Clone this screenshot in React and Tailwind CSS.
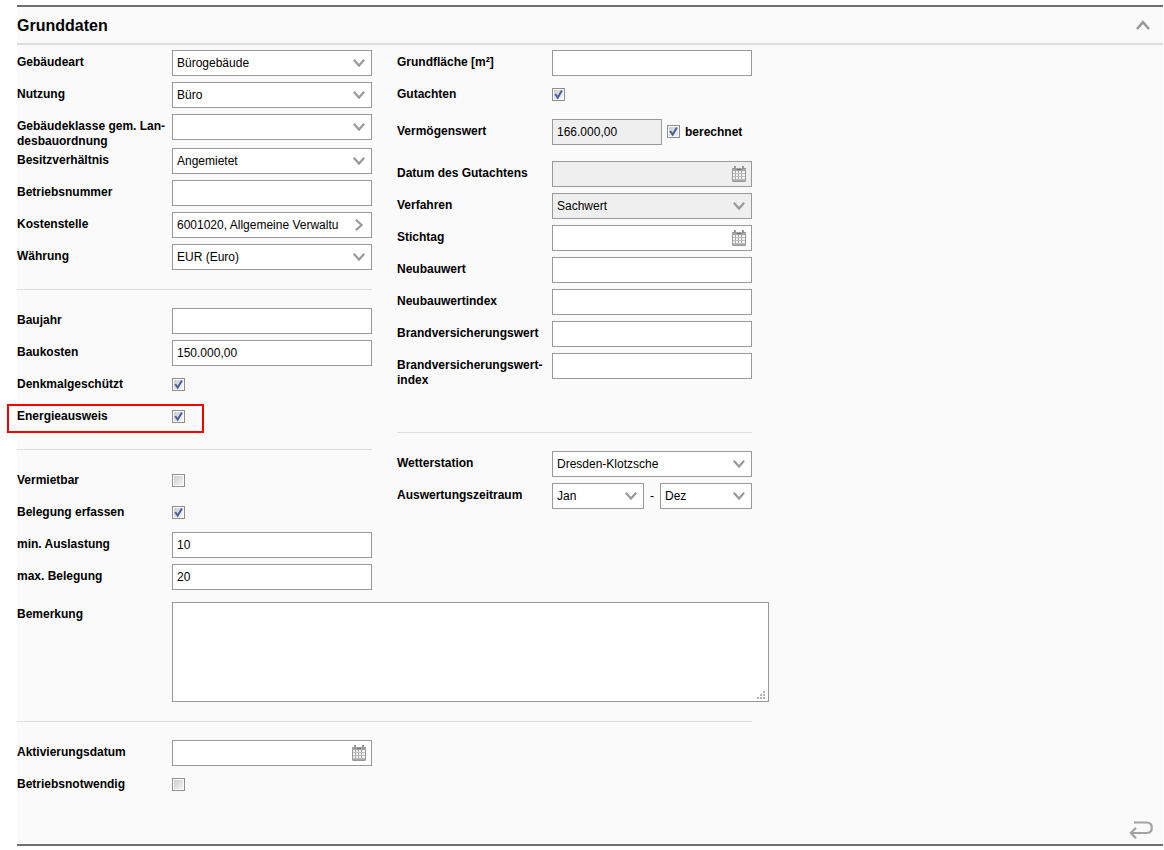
import clsx from "clsx";

function Row({ id, label, children, className }) {
  return (
    <div className={clsx("flex min-h-8", className)}>
      <label htmlFor={id} className="-mb-px w-[155px] shrink-0 pt-[5px] font-bold whitespace-pre-line">
        {label}
      </label>
      {children}
    </div>
  );
}

function Divider({ className = "mt-[13px]" }) {
  return <hr className={clsx("mb-[18px] border-0 border-t border-[#dedede]", className)} />;
}

function Chevron({ className }) {
  return (
    <svg className={className} width="12" height="8" viewBox="0 0 12 8" fill="none" stroke="#999" strokeWidth="2.2">
      <path d="M0.8 0.8L6 6.6L11.2 0.8" />
    </svg>
  );
}

function CalendarIcon() {
  return (
    <svg width="14" height="16" viewBox="0 0 14 16" fill="none">
      <rect x="0.5" y="2.5" width="13" height="13" rx="0.5" fill="#f3f3f3" stroke="#999" />
      <path d="M3.5 5V15M6.5 5V15M9.5 5V15" stroke="#a3a3a3" />
      <path d="M1 7.5H13M1 10.5H13M1 13.5H13" stroke="#bdbdbd" />
      <rect x="0" y="2" width="14" height="3" fill="#a3a3a3" />
      <path d="M1 14.5H13" stroke="#aaa" />
      <path d="M3 0V3M11 0V3" stroke="#999" strokeWidth="2" />
      <path d="M5 3.5H9" stroke="#777" />
    </svg>
  );
}

const field = "h-[26px] w-full border border-[#999] px-1 outline-none";

function TextField({ id, label, value = "" }) {
  return (
    <Row id={id} label={label}>
      <div className="w-[200px]">
        <input id={id} type="text" defaultValue={value} className={clsx(field, "bg-white")} />
      </div>
    </Row>
  );
}

function Select({ id, value, disabled, className = "w-[200px]", ...rest }) {
  return (
    <div className={clsx("relative h-[26px]", className)}>
      <select
        id={id}
        disabled={disabled}
        defaultValue={value}
        className={clsx(field, "appearance-none pr-6 text-black opacity-100", disabled ? "bg-[#efefef]" : "bg-white")}
        {...rest}
      >
        <option value={value}>{value}</option>
      </select>
      <Chevron className="pointer-events-none absolute top-[9px] right-[7px]" />
    </div>
  );
}

function SelectField({ id, label, value, disabled }) {
  return (
    <Row id={id} label={label}>
      <Select id={id} value={value} disabled={disabled} />
    </Row>
  );
}

function DateField({ id, label, disabled }) {
  return (
    <Row id={id} label={label}>
      <div className="relative h-[26px] w-[200px]">
        <input
          id={id}
          type="text"
          disabled={disabled}
          className={clsx(field, "pr-6", disabled ? "bg-[#efefef]" : "bg-white")}
        />
        <button type="button" disabled={disabled} aria-label="Kalender" className="absolute top-[5px] right-[6px]">
          <CalendarIcon />
        </button>
      </div>
    </Row>
  );
}

function Checkbox({ id, checked }) {
  return (
    <span className="relative mt-[6px] block size-[13px] shrink-0">
      <input
        id={id}
        type="checkbox"
        defaultChecked={checked}
        className="peer block size-[13px] appearance-none border border-[#8e8f8f] bg-linear-to-br from-[#c3c8cd] to-[#fafafa] bg-clip-content p-px"
      />
      <svg
        className="pointer-events-none absolute inset-0 hidden peer-checked:block"
        width="13"
        height="13"
        viewBox="0 0 13 13"
        fill="none"
      >
        <path d="M3.2 6L5.7 9.6L9.9 2.6" stroke="#4a5f9e" strokeWidth="2" />
      </svg>
    </span>
  );
}

function CheckField({ id, label, checked, marked }) {
  return (
    <div className="relative">
      <Row id={id} label={label}>
        <Checkbox id={id} checked={checked} />
      </Row>
      {marked && (
        <div className="pointer-events-none absolute top-0 -left-[10px] h-[29px] w-[197px] border-2 border-[#f40000]" />
      )}
    </div>
  );
}

export default function App() {
  return (
    <div className="bg-white pt-[5px] pr-px pl-[17px] font-['Liberation_Sans',Arial,sans-serif] text-[12px] leading-[15px] text-black">
      <section className="border-y-2 border-[#6f6f6f] bg-[#fafafa]">
        <header className="flex h-[38px] items-center justify-between border-b-2 border-[#dedede] pr-[13px]">
          <h2 className="pt-[2px] text-[16px] leading-5 font-bold">Grunddaten</h2>
          <button type="button" aria-label="Einklappen">
            <svg width="14" height="10" viewBox="0 0 14 10" fill="none" stroke="#999" strokeWidth="2.6">
              <path d="M1 9L7 2.2L13 9" />
            </svg>
          </button>
        </header>

        <form className="pt-[5px]">
          <div className="flex flex-wrap gap-x-[25px]">
            <div className="w-[355px]">
              <SelectField id="gebaeudeart" label="Gebäudeart" value="Bürogebäude" />
              <SelectField id="nutzung" label="Nutzung" value="Büro" />
              <SelectField id="klasse" label={"Gebäudeklasse gem. Lan-\ndesbauordnung"} value="" />
              <SelectField id="besitz" label="Besitzverhältnis" value="Angemietet" />
              <TextField id="betriebsnummer" label="Betriebsnummer" />
              <Row id="kostenstelle" label="Kostenstelle">
                <div className="relative h-[26px] w-[200px]">
                  <input
                    id="kostenstelle"
                    type="text"
                    defaultValue="6001020, Allgemeine Verwaltu"
                    className={clsx(field, "bg-white pr-6")}
                  />
                  <button type="button" aria-label="Auswählen" className="absolute top-[7px] right-[9px]">
                    <svg width="8" height="12" viewBox="0 0 8 12" fill="none" stroke="#999" strokeWidth="2.2">
                      <path d="M0.8 0.8L6.6 6L0.8 11.2" />
                    </svg>
                  </button>
                </div>
              </Row>
              <SelectField id="waehrung" label="Währung" value="EUR (Euro)" />
              <Divider />
              <TextField id="baujahr" label="Baujahr" />
              <TextField id="baukosten" label="Baukosten" value="150.000,00" />
              <CheckField id="denkmal" label="Denkmalgeschützt" checked />
              <CheckField id="energieausweis" label="Energieausweis" checked marked />
              <Divider />
              <CheckField id="vermietbar" label="Vermietbar" />
              <CheckField id="belegung" label="Belegung erfassen" checked />
              <TextField id="min" label="min. Auslastung" value="10" />
              <TextField id="max" label="max. Belegung" value="20" />
            </div>

            <div className="w-[355px]">
              <TextField id="grundflaeche" label="Grundfläche [m²]" />
              <CheckField id="gutachten" label="Gutachten" checked />
              <Row id="vermoegenswert" label="Vermögenswert" className="mt-[5px] mb-[10px]">
                <div className="w-[110px]">
                  <input
                    id="vermoegenswert"
                    type="text"
                    disabled
                    defaultValue="166.000,00"
                    className={clsx(field, "bg-[#efefef] text-black")}
                  />
                </div>
                <div className="ml-[5px] flex gap-[5px]">
                  <Checkbox id="berechnet" checked />
                  <label htmlFor="berechnet" className="pt-[6px] font-bold">
                    berechnet
                  </label>
                </div>
              </Row>
              <DateField id="datum" label="Datum des Gutachtens" disabled />
              <SelectField id="verfahren" label="Verfahren" value="Sachwert" disabled />
              <DateField id="stichtag" label="Stichtag" />
              <TextField id="neubauwert" label="Neubauwert" />
              <TextField id="neubauwertindex" label="Neubauwertindex" />
              <TextField id="brandwert" label="Brandversicherungswert" />
              <TextField id="brandwertindex" label={"Brandversicherungswert-\nindex"} />
              <Divider className="mt-[45px]" />
              <SelectField id="wetterstation" label="Wetterstation" value="Dresden-Klotzsche" />
              <Row id="von" label="Auswertungszeitraum">
                <div className="flex w-[200px] items-start justify-between">
                  <Select id="von" value="Jan" className="w-[92px]" />
                  <span className="leading-[26px]">-</span>
                  <Select id="bis" value="Dez" className="w-[92px]" aria-label="Auswertungszeitraum bis" />
                </div>
              </Row>
            </div>
          </div>

          <Row id="bemerkung" label="Bemerkung" className="mt-[6px]">
            <div className="relative w-full max-w-[597px]">
              <textarea
                id="bemerkung"
                className="block h-[100px] w-full resize-none border border-[#999] bg-white p-1 outline-none"
              />
              <svg className="pointer-events-none absolute right-1 bottom-[3px]" width="8" height="8" fill="#999">
                <path d="M6 0h2v2h-2zM3 3h2v2h-2zM6 3h2v2h-2zM0 6h2v2h-2zM3 6h2v2h-2zM6 6h2v2h-2z" opacity="0.75" />
              </svg>
            </div>
          </Row>

          <div className="max-w-[735px]">
            <Divider className="mt-[19px]" />
            <DateField id="aktivierung" label="Aktivierungsdatum" />
            <CheckField id="betriebsnotwendig" label="Betriebsnotwendig" />
          </div>
        </form>

        <footer className="flex h-10 items-end justify-end pr-[10px] pb-[5px]">
          <button type="button" aria-label="Zurück">
            <svg width="24" height="18" viewBox="0 0 24 18" fill="none" stroke="#a3a3a3" strokeWidth="2.2">
              <path d="M5 1.5H17.5C21 1.5 22.8 3.6 22.8 6.7C22.8 9.9 21 12 17.5 12H1.8" />
              <path d="M7 6.8L1.8 12L7 17.2" />
            </svg>
          </button>
        </footer>
      </section>
    </div>
  );
}
